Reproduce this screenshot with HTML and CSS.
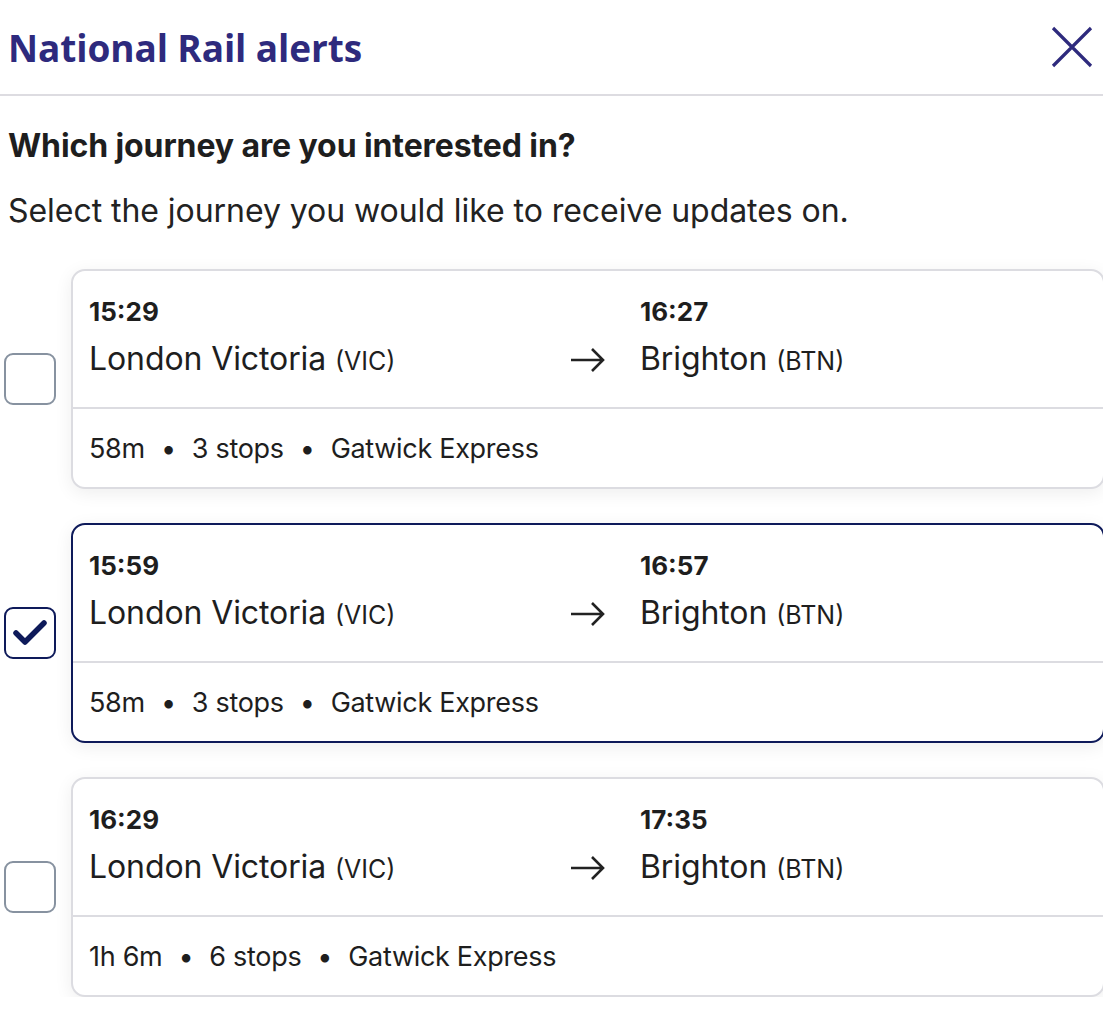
FILE: index.html
```html
<!DOCTYPE html>
<html lang="en">
<head>
<meta charset="utf-8">
<title>National Rail alerts</title>
<link rel="stylesheet" href="styles.css">
</head>
<body>
<header class="header">
  <h1 class="title">National Rail alerts</h1>
  <button class="close" aria-label="Close">
    <svg width="44" height="44" viewBox="0 0 44 44"><path d="M3 3 L41 41 M41 3 L3 41" stroke="#2e2a7d" stroke-width="3.2" fill="none"/></svg>
  </button>
</header>
<main class="content">
  <h2 class="question">Which journey are you interested in?</h2>
  <p class="hint">Select the journey you would like to receive updates on.</p>

  <div class="list">
    <label class="row">
      <span class="check"></span>
      <div class="card">
        <div class="card-top">
          <div class="time">15:29</div>
          <div></div>
          <div class="time">16:27</div>
          <div class="station">London Victoria <span class="code">(VIC)</span></div>
          <svg class="arrow" width="36" height="26" viewBox="0 0 36 26"><path d="M1 13 H33 M22 2 L33 13 L22 24" stroke="#222" stroke-width="2.6" fill="none"/></svg>
          <div class="station">Brighton <span class="code">(BTN)</span></div>
        </div>
        <div class="card-bottom">58m<span class="dot">•</span>3 stops<span class="dot">•</span>Gatwick Express</div>
      </div>
    </label>

    <label class="row">
      <span class="check checked">
        <svg width="38" height="30" viewBox="0 0 38 30"><path d="M5 15 L14 24 L33 5" stroke="#0e1a5a" stroke-width="5.5" stroke-linecap="round" stroke-linejoin="round" fill="none"/></svg>
      </span>
      <div class="card selected">
        <div class="card-top">
          <div class="time">15:59</div>
          <div></div>
          <div class="time">16:57</div>
          <div class="station">London Victoria <span class="code">(VIC)</span></div>
          <svg class="arrow" width="36" height="26" viewBox="0 0 36 26"><path d="M1 13 H33 M22 2 L33 13 L22 24" stroke="#222" stroke-width="2.6" fill="none"/></svg>
          <div class="station">Brighton <span class="code">(BTN)</span></div>
        </div>
        <div class="card-bottom">58m<span class="dot">•</span>3 stops<span class="dot">•</span>Gatwick Express</div>
      </div>
    </label>

    <label class="row">
      <span class="check"></span>
      <div class="card">
        <div class="card-top">
          <div class="time">16:29</div>
          <div></div>
          <div class="time">17:35</div>
          <div class="station">London Victoria <span class="code">(VIC)</span></div>
          <svg class="arrow" width="36" height="26" viewBox="0 0 36 26"><path d="M1 13 H33 M22 2 L33 13 L22 24" stroke="#222" stroke-width="2.6" fill="none"/></svg>
          <div class="station">Brighton <span class="code">(BTN)</span></div>
        </div>
        <div class="card-bottom">1h 6m<span class="dot">•</span>6 stops<span class="dot">•</span>Gatwick Express</div>
      </div>
    </label>
  </div>
</main>
</body>
</html>
```

FILE: styles.css
```css
* { box-sizing: border-box; }
html, body { margin: 0; padding: 0; background: #fff; }
body {
  font-family: Inter, "Liberation Sans", sans-serif;
  color: #1e1e1e;
  width: 1103px;
  overflow: hidden;
}
.header {
  display: flex;
  align-items: center;
  justify-content: space-between;
  height: 96px;
  padding: 0 9px 0 8px;
  border-bottom: 2px solid #dddce1;
}
.title {
  margin: 0;
  font-family: "Open Sans", sans-serif;
  font-weight: 700;
  font-size: 37px;
  color: #2e2a7d;
  letter-spacing: -0.1px;
}
.close {
  background: none;
  border: 0;
  padding: 0;
  width: 44px;
  height: 44px;
  display: flex;
}
.content { padding: 0 0 0 8px; }
.question {
  margin: 30px 0 0;
  font-size: 32px;
  font-weight: 700;
  line-height: 40px;
  letter-spacing: -0.1px;
}
.hint {
  margin: 25px 0 0;
  font-size: 32px;
  line-height: 40px;
  font-weight: 400;
  color: #222;
  letter-spacing: -0.05px;
}
.list {
  margin-top: 38px;
  display: flex;
  flex-direction: column;
  gap: 34px;
  margin-left: -4px;
}
.row {
  display: flex;
  align-items: center;
  gap: 15px;
}
.check {
  flex: none;
  width: 52px;
  height: 52px;
  border: 2px solid #8792a0;
  border-radius: 9px;
  background: #fff;
  display: flex;
  align-items: center;
  justify-content: center;
}
.check.checked { border-color: #0e1a5a; }
.card {
  flex: 1;
  height: 220px;
  background: #fff;
  border: 2px solid #dcdce1;
  border-radius: 14px;
  box-shadow: 0 4px 18px rgba(0,0,0,0.07);
  display: flex;
  flex-direction: column;
  margin-right: -2px;
}
.card.selected { border-color: #0e1a5a; }
.card-top {
  height: 138px;
  display: grid;
  grid-template-columns: 481px 36px 1fr;
  grid-template-rows: 30px 38px;
  column-gap: 0;
  row-gap: 14px;
  align-items: center;
  padding: 26px 16px 0;
  border-bottom: 2px solid #dcdce1;
}
.card-top > :nth-child(3),
.card-top > :nth-child(6) { margin-left: 34px; }
.time {
  font-size: 26px;
  font-weight: 700;
  line-height: 30px;
}
.station {
  font-size: 32px;
  line-height: 38px;
  letter-spacing: -0.1px;
}
.code { font-size: 25px; letter-spacing: 0; }
.card-bottom {
  flex: 1;
  display: flex;
  align-items: center;
  padding: 0 16px;
  font-size: 27px;
  letter-spacing: -0.3px;
}
.dot { font-size: 27px; margin: 0 16px; }
```
